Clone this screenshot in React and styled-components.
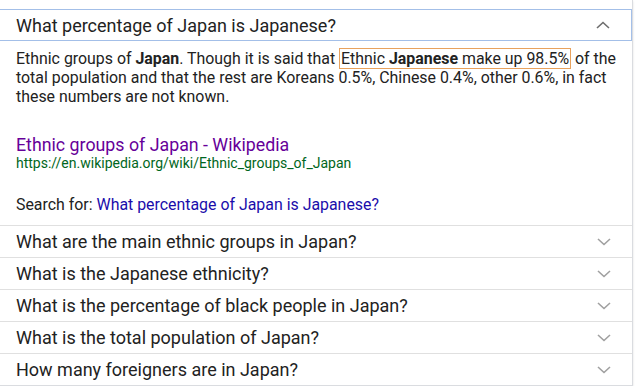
import React from "react";
import styled, { createGlobalStyle } from "styled-components";

const Global = createGlobalStyle`
  html, body { margin: 0; padding: 0; background: #fff; }
  body { font-family: Roboto, "Noto Sans", Arial, sans-serif; color: #222; }
`;

const Panel = styled.div`
  width: 632px;
  padding-top: 9px;
  border-right: 1px solid #dadce0;
  border-bottom: 1px solid #dadce0;
  box-shadow: 0 1px 2px rgba(0, 0, 0, 0.12);
  background: #fff;
`;

const Header = styled.div`
  display: flex;
  align-items: center;
  justify-content: space-between;
  height: 30px;
  border: 1px solid #a3bfe8;
  border-left: none;
  padding: 0 21px 0 16px;
  font-size: 18px;
  color: #222;
`;

const Body = styled.div`
  padding: 8px 8px 11px 16px;
`;

const Snippet = styled.div`
  font-size: 15.9px;
  line-height: 19px;
  color: #222;
`;

const Highlight = styled.span`
  border: 1px solid #e8a25d;
  padding: 0 1px;
`;

const Source = styled.div`
  margin-top: 29px;
`;

const Title = styled.div`
  font-size: 17.8px;
  line-height: 20px;
  color: #660099;
`;

const Url = styled.div`
  font-size: 14px;
  line-height: 16px;
  color: #006621;
`;

const SearchFor = styled.div`
  margin-top: 24px;
  font-size: 15.9px;
  line-height: 19px;
  color: #222;
`;

const SearchLink = styled.span`
  color: #1a0dab;
`;

const Row = styled.div`
  display: flex;
  align-items: center;
  justify-content: space-between;
  height: 31px;
  border-top: 1px solid #e0e0e0;
  padding: 0 21px 0 16px;
  font-size: 18px;
  color: #222;
`;

const Chevron = ({ up, color }) => (
  <svg width="14" height="8" viewBox="0 0 14 8" style={{ display: "block" }}>
    <polyline
      points={up ? "1,7 7,1.5 13,7" : "1,1 7,6.5 13,1"}
      fill="none"
      stroke={color}
      strokeWidth="1.6"
    />
  </svg>
);

const questions = [
  "What are the main ethnic groups in Japan?",
  "What is the Japanese ethnicity?",
  "What is the percentage of black people in Japan?",
  "What is the total population of Japan?",
  "How many foreigners are in Japan?",
];

export default function App() {
  return (
    <>
      <Global />
      <Panel>
        <Header>
          <span>What percentage of Japan is Japanese?</span>
          <Chevron up color="#6d6d6d" />
        </Header>
        <Body>
          <Snippet>
            Ethnic groups of <b>Japan</b>. Though it is said that{" "}
            <Highlight>
              Ethnic <b>Japanese</b> make up 98.5%
            </Highlight>{" "}
            of the total population and that the rest are Koreans 0.5%, Chinese
            0.4%, other 0.6%, in fact these numbers are not known.
          </Snippet>
          <Source>
            <Title>Ethnic groups of Japan - Wikipedia</Title>
            <Url>https://en.wikipedia.org/wiki/Ethnic_groups_of_Japan</Url>
          </Source>
          <SearchFor>
            Search for: <SearchLink>What percentage of Japan is Japanese?</SearchLink>
          </SearchFor>
        </Body>
        {questions.map((q) => (
          <Row key={q}>
            <span>{q}</span>
            <Chevron color="#a0a0a0" />
          </Row>
        ))}
      </Panel>
    </>
  );
}
